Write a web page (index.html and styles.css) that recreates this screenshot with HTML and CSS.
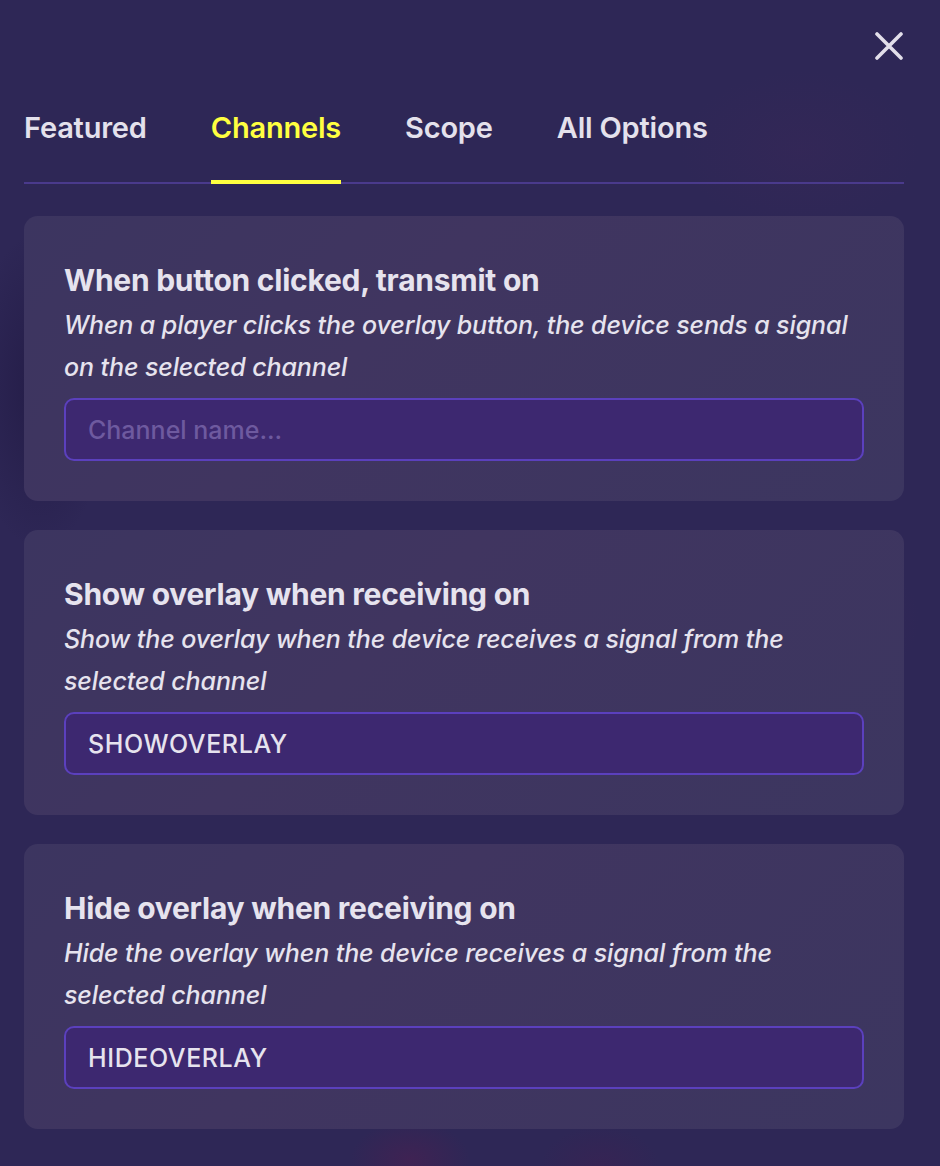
FILE: index.html
```html
<!DOCTYPE html>
<html lang="en">
<head>
<meta charset="utf-8">
<title>Channels</title>
<link rel="stylesheet" href="styles.css">
</head>
<body>
<div class="panel">
  <div class="topbar">
    <button class="close" aria-label="Close">
      <svg viewBox="0 0 28 28" width="28" height="28"><path d="M2 2 L26 26 M26 2 L2 26" stroke="#e2dfea" stroke-width="3.6" stroke-linecap="round" fill="none"/></svg>
    </button>
  </div>
  <nav class="tabs">
    <span class="tab">Featured</span>
    <span class="tab active">Channels</span>
    <span class="tab">Scope</span>
    <span class="tab">All Options</span>
  </nav>
  <div class="cards">
    <section class="card">
      <h2 class="title">When button clicked, transmit on</h2>
      <p class="desc">When a player clicks the overlay button, the device sends a signal on the selected channel</p>
      <div class="field placeholder">Channel name...</div>
    </section>
    <section class="card">
      <h2 class="title">Show overlay when receiving on</h2>
      <p class="desc">Show the overlay when the device receives a signal from the selected channel</p>
      <div class="field">SHOWOVERLAY</div>
    </section>
    <section class="card">
      <h2 class="title">Hide overlay when receiving on</h2>
      <p class="desc">Hide the overlay when the device receives a signal from the selected channel</p>
      <div class="field">HIDEOVERLAY</div>
    </section>
  </div>
</div>
</body>
</html>
```
FILE: styles.css
```css
html, body {
  margin: 0;
  padding: 0;
}
body {
  width: 940px;
  min-height: 1166px;
  font-family: Inter, "Noto Sans", "Liberation Sans", sans-serif;
  color: #e6e3ee;
  background-color: #2e2756;
  background-image:
    radial-gradient(ellipse 70px 160px at 40px 390px, rgba(28, 20, 60, 0.55), rgba(28, 20, 60, 0) 100%),
    radial-gradient(ellipse 60px 40px at 410px 1160px, rgba(80, 30, 80, 0.5), rgba(80, 30, 80, 0) 100%),
    radial-gradient(ellipse 60px 40px at 600px 1166px, rgba(70, 30, 80, 0.35), rgba(70, 30, 80, 0) 100%),
    radial-gradient(ellipse 120px 80px at 800px 620px, rgba(80, 40, 90, 0.25), rgba(80, 40, 90, 0) 100%),
    radial-gradient(ellipse 120px 80px at 800px 150px, rgba(70, 40, 90, 0.2), rgba(70, 40, 90, 0) 100%);
}
.panel {
  padding: 0 36px 0 24px;
}
.topbar {
  display: flex;
  justify-content: flex-end;
  padding-top: 32px;
  margin-right: 1px;
}
.close {
  width: 28px;
  height: 28px;
  padding: 0;
  border: 0;
  background: none;
  display: block;
}
.close svg {
  display: block;
}
.tabs {
  display: flex;
  gap: 64px;
  margin-top: 51px;
  border-bottom: 2px solid #4a3a8c;
}
.tab {
  font-size: 29px;
  font-weight: 600;
  line-height: 34px;
  letter-spacing: -0.2px;
  color: #e4e1ec;
  padding-bottom: 35px;
  border-bottom: 4px solid transparent;
  margin-bottom: -2px;
}
.tab.active {
  color: #ffff40;
  border-bottom-color: #ffff40;
}
.cards {
  display: flex;
  flex-direction: column;
  gap: 29px;
  margin-top: 32px;
}
.card {
  background: linear-gradient(135deg, #3c3560 0%, #403560 40%, #3c3660 100%);
  border-radius: 14px;
  padding: 40px;
}
.title {
  margin: 0;
  font-size: 30px;
  line-height: 48px;
  font-weight: 700;
  letter-spacing: -0.25px;
  color: #e6e3ee;
}
.desc {
  margin: 0;
  font-size: 25px;
  line-height: 42px;
  font-style: italic;
  font-weight: 500;
  letter-spacing: -0.1px;
  color: #e6e3ee;
}
.field {
  margin-top: 10px;
  height: 63px;
  box-sizing: border-box;
  border: 2px solid #5b40bd;
  border-radius: 10px;
  background: #3d2870;
  padding: 0 22px;
  display: flex;
  align-items: center;
  font-size: 25px;
  font-weight: 500;
  letter-spacing: 0.6px;
  color: #e6e3ee;
}
.field.placeholder {
  color: #6e5a9f;
  letter-spacing: 0;
}
```
